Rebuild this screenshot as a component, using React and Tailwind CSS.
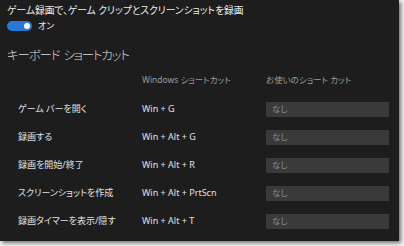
import React from "react";

const rows = [
  { label: "ゲーム バーを開く", keys: "Win + G" },
  { label: "録画する", keys: "Win + Alt + G" },
  { label: "録画を開始/終了", keys: "Win + Alt + R" },
  { label: "スクリーンショットを作成", keys: "Win + Alt + PrtScn" },
  { label: "録画タイマーを表示/隠す", keys: "Win + Alt + T" },
];

const ShortcutRow = ({ label, keys }) => {
  return (
    <div className="grid grid-cols-[124px_124px_123px] h-[28px] items-center">
      <div className="text-[9px] text-[#e2e2e2]">{label}</div>
      <div className="text-[9px] text-[#e2e2e2]">{keys}</div>
      <div className="h-[15px] bg-[#3a3a3a] flex items-center px-[6px] text-[8.5px] text-[#8c8c8c]">なし</div>
    </div>
  );
};

const App = () => {
  return (
    <div className="w-[404px] h-[246px] bg-[#f4f4f4] font-['Noto_Sans','Noto_Sans_CJK_JP',sans-serif] [font-feature-settings:'palt']">
      <div className="w-[399px] h-[241px] bg-[#1d1d1d] shadow-[2px_2px_4px_rgba(0,0,0,0.55)]">
        <div className="pt-[4px] px-[7px] h-[16px] text-[9.75px] leading-[13px] text-[#ececec]">
          ゲーム録画で、ゲーム クリップとスクリーンショットを録画
        </div>
        <div className="mt-[5px] ml-[7px] h-[10px] flex items-center gap-[6px]">
          <div className="w-[25px] h-[10px] rounded-full bg-[#2a78d6] flex items-center justify-end pr-[2px]">
            <div className="w-[6px] h-[6px] rounded-full bg-white"></div>
          </div>
          <span className="text-[9px] text-[#ececec]">オン</span>
        </div>
        <div className="mt-[16px] px-[7px] h-[18px] flex gap-[4px] text-[12.5px] leading-[18px] tracking-[-1.2px] font-light text-[#dcdcdc]">
          <span>キーボード</span>
          <span>ショートカット</span>
        </div>
        <div className="mt-[1px] pl-[18px]">
          <div className="grid grid-cols-[124px_124px_123px] h-[29px] items-center text-[8.5px] text-[#9c9c9c]">
            <div></div>
            <div>Windows ショートカット</div>
            <div>お使いのショート カット</div>
          </div>
          {rows.map((r) => (
            <ShortcutRow key={r.label} label={r.label} keys={r.keys} />
          ))}
        </div>
      </div>
    </div>
  );
};

export default App;
